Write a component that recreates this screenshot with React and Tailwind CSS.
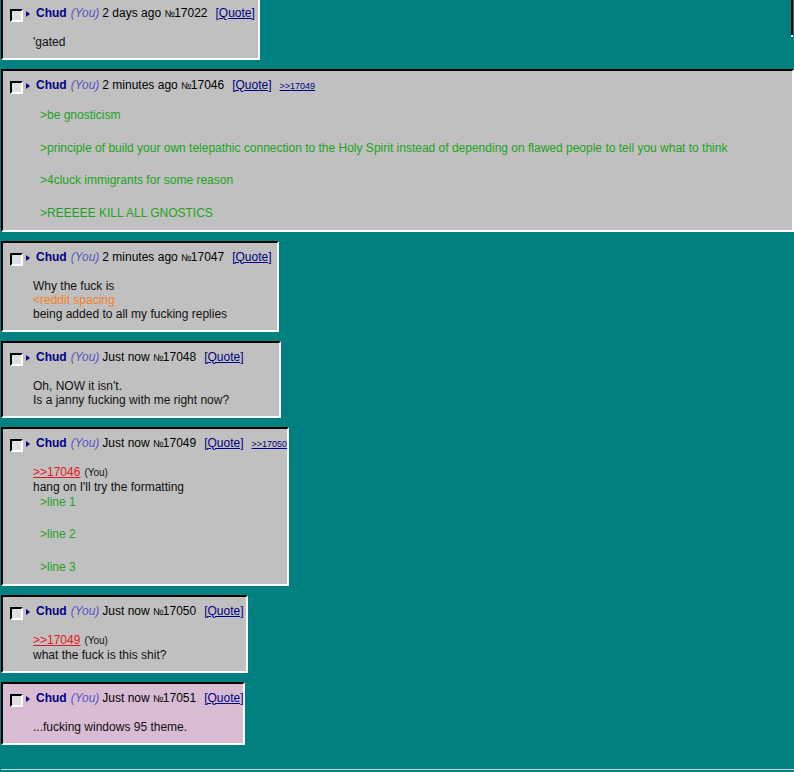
import React from 'react';

const posts = [
  {
    id: '17022',
    time: '2 days ago',
    width: 'w-[259px]',
    lines: [{ kind: 'text', text: "'gated" }],
  },
  {
    id: '17046',
    time: '2 minutes ago',
    width: 'w-[793px]',
    reply: '17049',
    lines: [
      { kind: 'green', text: 'be gnosticism' },
      { kind: 'blank' },
      { kind: 'green', text: 'principle of build your own telepathic connection to the Holy Spirit instead of depending on flawed people to tell you what to think' },
      { kind: 'blank' },
      { kind: 'green', text: '4cluck immigrants for some reason' },
      { kind: 'blank' },
      { kind: 'green', text: 'REEEEE KILL ALL GNOSTICS' },
    ],
  },
  {
    id: '17047',
    time: '2 minutes ago',
    width: 'w-[278px]',
    lines: [
      { kind: 'text', text: 'Why the fuck is' },
      { kind: 'orange', text: '<reddit spacing' },
      { kind: 'text', text: 'being added to all my fucking replies' },
    ],
  },
  {
    id: '17048',
    time: 'Just now',
    width: 'w-[280px]',
    lines: [
      { kind: 'text', text: "Oh, NOW it isn't." },
      { kind: 'text', text: 'Is a janny fucking with me right now?' },
    ],
  },
  {
    id: '17049',
    time: 'Just now',
    width: 'w-[288px]',
    reply: '17050',
    lines: [
      { kind: 'quote', text: '17046' },
      { kind: 'text', text: "hang on I'll try the formatting" },
      { kind: 'green', text: 'line 1' },
      { kind: 'blank' },
      { kind: 'green', text: 'line 2' },
      { kind: 'blank' },
      { kind: 'green', text: 'line 3' },
    ],
  },
  {
    id: '17050',
    time: 'Just now',
    width: 'w-[247px]',
    lines: [
      { kind: 'quote', text: '17049' },
      { kind: 'text', text: 'what the fuck is this shit?' },
    ],
  },
  {
    id: '17051',
    time: 'Just now',
    width: 'w-[244px]',
    highlight: true,
    lines: [{ kind: 'text', text: '...fucking windows 95 theme.' }],
  },
];

function Line({ line }) {
  if (line.kind === 'blank') return <div className="h-[16.5px]" />;
  if (line.kind === 'green')
    return <div className="pl-[7px] leading-[16px] text-[#22a322] whitespace-nowrap">&gt;{line.text}</div>;
  if (line.kind === 'orange')
    return <div className="leading-[14px] text-[#f5821f]">{line.text}</div>;
  if (line.kind === 'quote')
    return (
      <div className="leading-[14px]">
        <span className="text-[#e8161a] underline">&gt;&gt;{line.text}</span>
        <span className="ml-[4px] text-[10px] text-[#111]">(You)</span>
      </div>
    );
  return <div className="leading-[14px] text-[#111]">{line.text}</div>;
}

function Post({ post }) {
  return (
    <div
      className={`${post.width} shrink-0 mb-[9px] border-2 border-t-black border-l-black border-b-white border-r-white pt-[4px] pb-[9px] ${
        post.highlight ? 'bg-[#d8bcd4]' : 'bg-[#c0c0c0]'
      }`}
    >
      {/* header */}
      <div className="flex items-start h-[20px]">
        <div className="shrink-0 ml-[7px] mt-[6px] w-[13px] h-[13px] border-2 border-t-black border-l-black border-b-white border-r-white bg-[#e0e0e0]" />
        <svg className="shrink-0 ml-[3px] mt-[8px]" width="4" height="6" viewBox="0 0 4 6">
          <polygon points="0,0 4,3 0,6" fill="#000080" />
        </svg>
        <div className="shrink-0 ml-[6px] leading-[20px] whitespace-nowrap text-black">
          <span className="font-bold text-[#000080]">Chud</span>
          <span className="ml-[4px] italic text-[#5656bc]">(You)</span>
          <span className="ml-[3px]">
            {post.time} <span className="text-[10px] tracking-[-1px]">№</span>
            {post.id}
          </span>
          <span className="ml-[8px] underline text-[#000080]">[Quote]</span>
          {post.reply && (
            <span className="ml-[8px] text-[9px] underline text-[#000080]">&gt;&gt;{post.reply}</span>
          )}
        </div>
      </div>
      {/* body */}
      <div className="mt-[12px] pl-[30px]">
        {post.lines.map((line, i) => (
          <Line key={i} line={line} />
        ))}
      </div>
    </div>
  );
}

export default function App() {
  const [first, ...rest] = posts;
  return (
    <div
      className="min-h-[772px] bg-[#008080] pl-[1px] overflow-hidden text-[12px]"
      style={{ fontFamily: '"Liberation Sans", Arial, sans-serif' }}
    >
      <div className="-mt-[3px] flex items-start justify-between">
        <Post post={first} />
        <div className="mr-[1px] flex flex-col">
          <div className="w-[2px] h-[38px] bg-black" />
          <div className="w-[2px] h-[2px] bg-white" />
        </div>
      </div>
      {rest.map((post) => (
        <Post key={post.id} post={post} />
      ))}
      <div className="mt-[24px] border-t border-[#c0d8d8]" />
    </div>
  );
}
